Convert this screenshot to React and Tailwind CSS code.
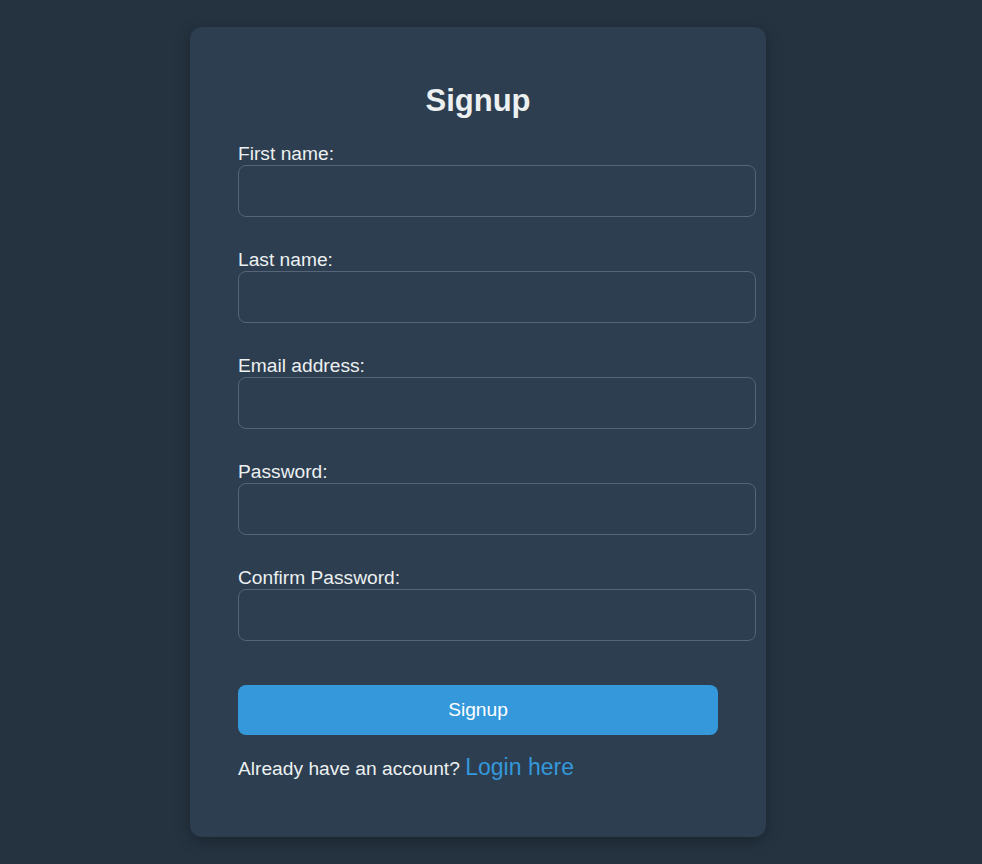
import React from 'react'

const fields = [
    { id: 'first', label: 'First name:', type: 'text' },
    { id: 'last', label: 'Last name:', type: 'text' },
    { id: 'email', label: 'Email address:', type: 'email' },
    { id: 'password', label: 'Password:', type: 'password' },
    { id: 'confirm', label: 'Confirm Password:', type: 'password' },
]

function Field({ id, label, type }) {
    return (
        <div className="mb-[32px]">
            <label htmlFor={id} className="block text-[19.2px] leading-[22px] text-[#ecf0f1]">
                {label}
            </label>
            <input
                id={id}
                type={type}
                className="block w-[518px] h-[52px] rounded-[8px] border border-[#56657a] bg-[#2c3e50] px-3 text-[#ecf0f1] outline-none"
            />
        </div>
    )
}

export default function App() {
    return (
        <div className="min-h-screen w-full bg-[#253341] flex items-center pl-[190px] font-['Liberation_Sans',Arial,sans-serif]">
            <div className="w-[576px] h-[810px] rounded-[12px] bg-[#2c3e50] shadow-[0_4px_16px_rgba(0,0,0,0.3)] px-[48px] pt-[57px]">
                <h2 className="text-center text-[31px] leading-[34px] font-bold text-[#ecf0f1] mb-[25px]">
                    Signup
                </h2>

                <form onSubmit={e => e.preventDefault()}>
                    {fields.map(f => <Field key={f.id} {...f} />)}

                    <button
                        type="submit"
                        className="block w-full h-[50px] mt-[44px] rounded-[8px] bg-[#3498db] text-white text-[19.2px]"
                    >
                        Signup
                    </button>
                </form>

                <p className="mt-[18px] text-[19.2px] text-[#ecf0f1] leading-[28px]">
                    Already have an account?{' '}
                    <a href="#" className="text-[23px] text-[#3498db]">Login here</a>
                </p>
            </div>
        </div>
    )
}
